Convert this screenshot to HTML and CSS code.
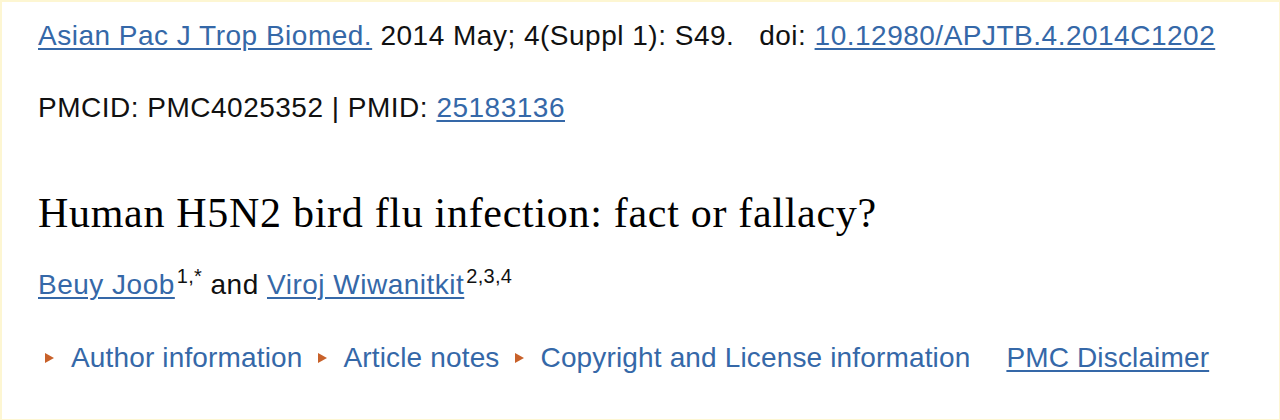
FILE: index.html
```html
<!DOCTYPE html>
<html>
<head>
<meta charset="utf-8">
<link rel="stylesheet" href="styles.css">
</head>
<body>
<div class="frame">
  <div class="citation">
    <a href="#" class="link">Asian Pac J Trop Biomed.</a> 2014 May; 4(Suppl 1): S49.&nbsp;&nbsp; doi: <a href="#" class="link">10.12980/APJTB.4.2014C1202</a>
  </div>
  <div class="ids">PMCID: PMC4025352 | PMID: <a href="#" class="link">25183136</a></div>
  <h1 class="title">Human H5N2 bird flu infection: fact or fallacy?</h1>
  <div class="authors">
    <a href="#" class="link">Beuy Joob</a><sup>1,*</sup> and <a href="#" class="link">Viroj Wiwanitkit</a><sup>2,3,4</sup>
  </div>
  <div class="nav">
    <span class="nav-item"><span class="tri"></span>Author information</span>
    <span class="nav-item"><span class="tri"></span>Article notes</span>
    <span class="nav-item"><span class="tri"></span>Copyright and License information</span>
    <a href="#" class="link disclaimer">PMC Disclaimer</a>
  </div>
</div>
</body>
</html>
```
FILE: styles.css
```css
html, body {
  margin: 0;
  padding: 0;
  background: #fff;
}
.frame {
  box-sizing: border-box;
  width: 1280px;
  height: 420px;
  border-top: 2px solid #fdf6d2;
  border-left: 2px solid #fdf6d2;
  border-right: 1px solid #fdf6d2;
  border-bottom: 1px solid #fdf6d2;
  padding: 17px 0 0 36px;
  font-family: "Liberation Sans", Arial, sans-serif;
  font-size: 28px;
  letter-spacing: 0.5px;
  color: #111;
}
.link {
  color: #3568a8;
  text-decoration: underline;
  text-decoration-thickness: 2px;
  text-underline-offset: 3px;
}
.citation {
  line-height: 34px;
}
.ids {
  margin-top: 38px;
  line-height: 34px;
}
.title {
  margin: 65px 0 0 0;
  font-family: "Liberation Serif", "Times New Roman", serif;
  font-weight: normal;
  font-size: 42px;
  letter-spacing: 0.7px;
  line-height: 46px;
  color: #000;
}
.authors {
  margin-top: 32px;
  line-height: 34px;
}
.authors sup {
  font-size: 20px;
  line-height: 0;
  vertical-align: 11px;
  letter-spacing: 0.3px;
  margin-left: 2px;
}
.nav {
  margin-top: 39px;
  display: flex;
  align-items: center;
  line-height: 34px;
  letter-spacing: 0.15px;
  color: #3568a8;
}
.nav-item {
  display: inline-flex;
  align-items: center;
  margin-right: 8px;
}
.tri {
  display: inline-block;
  width: 0;
  height: 0;
  border-top: 5px solid transparent;
  border-bottom: 5px solid transparent;
  border-left: 9px solid #c8612a;
  margin: 0 17px 0 7px;
}
.disclaimer {
  margin-left: 28px;
}
```
